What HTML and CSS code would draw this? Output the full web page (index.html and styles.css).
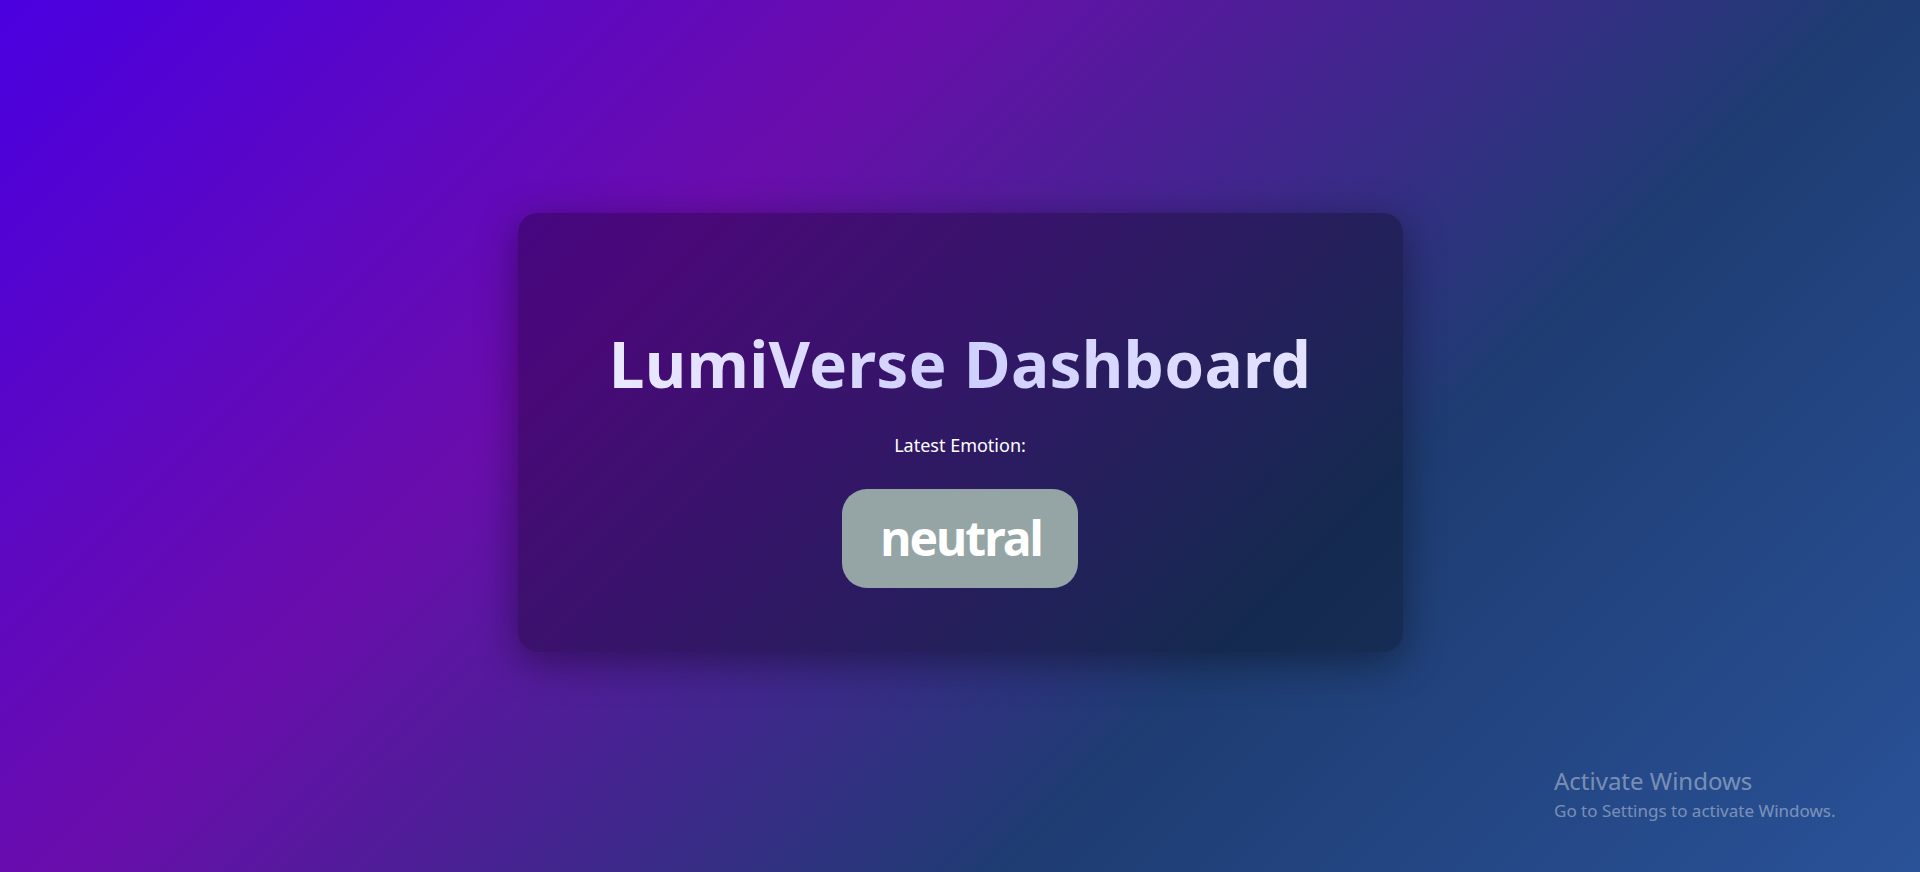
FILE: index.html
```html
<!DOCTYPE html>
<html lang="en">
<head>
<meta charset="utf-8">
<title>LumiVerse Dashboard</title>
<link rel="stylesheet" href="styles.css">
</head>
<body>
  <main class="card">
    <h1 class="title">LumiVerse Dashboard</h1>
    <p class="label">Latest Emotion:</p>
    <div class="badge">neutral</div>
  </main>
  <div class="watermark">
    <div class="wm-title">Activate Windows</div>
    <div class="wm-sub">Go to Settings to activate Windows.</div>
  </div>
</body>
</html>
```

FILE: styles.css
```css
html, body {
  margin: 0;
  padding: 0;
  height: 100%;
}

body {
  font-family: "Noto Sans", "Open Sans", sans-serif;
  background: linear-gradient(135deg, #4a00e0 0%, #6a0dad 33%, #1e3c72 67%, #2a5298 100%);
  display: flex;
  align-items: center;
  justify-content: center;
  min-height: 100vh;
  overflow: hidden;
}

.card {
  box-sizing: border-box;
  width: 885px;
  margin-bottom: 7px;
  padding: 111px 40px 64px;
  background: rgba(0, 0, 0, 0.3);
  border-radius: 20px;
  box-shadow: 0 10px 40px rgba(0, 0, 0, 0.4);
  display: flex;
  flex-direction: column;
  align-items: center;
  text-align: center;
}

.title {
  margin: 0;
  font-size: 64px;
  line-height: 80px;
  font-weight: 700;
  letter-spacing: 0.2px;
  background: linear-gradient(90deg, #ebe9ff 0%, #cfcfff 50%, #e4e2ff 100%);
  -webkit-background-clip: text;
  background-clip: text;
  color: transparent;
}

.label {
  margin: 28.5px 0 0;
  font-size: 18px;
  line-height: 24px;
  color: #ffffff;
}

.badge {
  margin-top: 32px;
  padding: 17.5px 36px 17.5px 38px;
  font-size: 48px;
  line-height: 64px;
  font-weight: 700;
  letter-spacing: -2px;
  color: #ffffff;
  background: #95a5a6;
  border-radius: 25px;
}

.watermark {
  position: absolute;
  left: 1554px;
  top: 765px;
  color: rgba(255, 255, 255, 0.4);
  font-family: "Noto Sans", "Open Sans", sans-serif;
}

.wm-title {
  font-size: 24px;
  line-height: 32px;
}

.wm-sub {
  margin-top: 3px;
  font-size: 17px;
  line-height: 22px;
}
```
